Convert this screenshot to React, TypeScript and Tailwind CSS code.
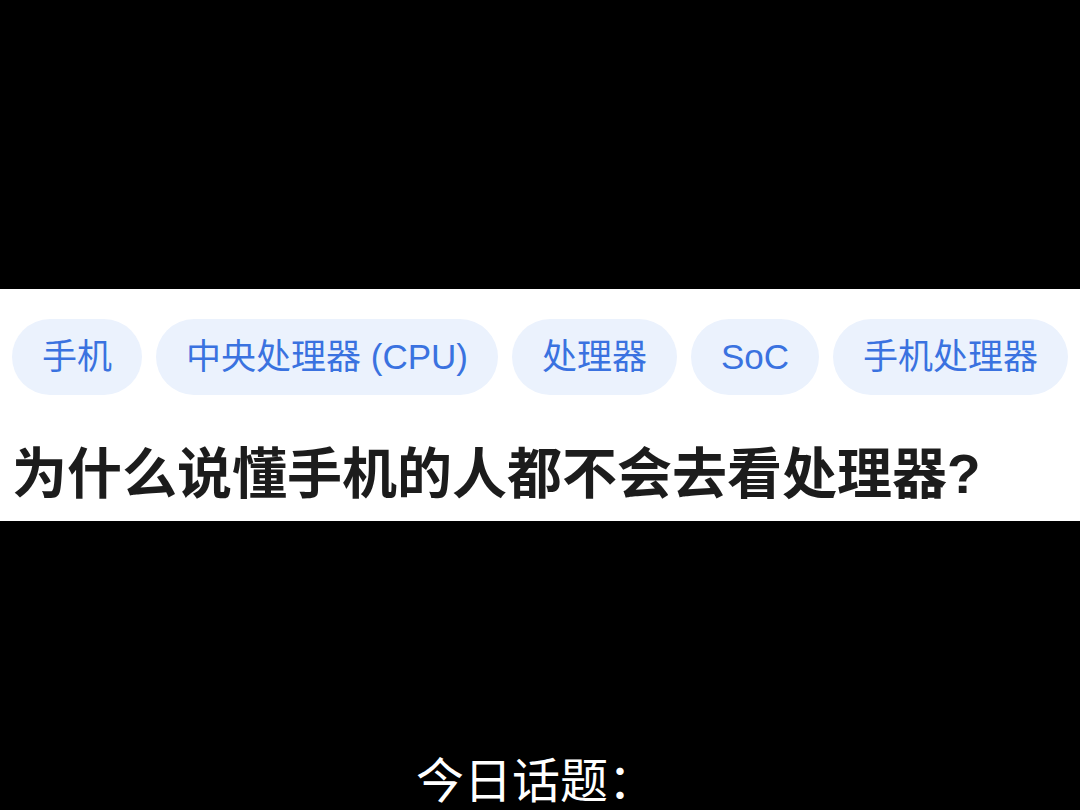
const tags = ['手机', '中央处理器 (CPU)', '处理器', 'SoC', '手机处理器']

export default function App() {
  return (
    <div
      className="w-[1080px] h-[810px] bg-black flex flex-col overflow-hidden"
      style={{ fontFamily: '"Liberation Sans", "Noto Sans CJK SC", sans-serif' }}
    >
      <div className="h-[289px]" />

      <div className="h-[232px] bg-white px-[12px] pt-[30px] overflow-hidden">
        <div className="flex gap-[14px] whitespace-nowrap">
          {tags.map((t) => (
            <span
              key={t}
              className="h-[76px] px-[30px] rounded-full bg-[#ebf2fd] text-[#3a72e0] text-[35px] flex items-center shrink-0"
            >
              {t}
            </span>
          ))}
        </div>
        <h1 className="mt-[49px] text-[55px] leading-[60px] font-bold text-[#1c1c1c] whitespace-nowrap">
          为什么说懂手机的人都不会去看处理器?
        </h1>
      </div>

      <div className="flex-1 flex flex-col justify-end items-center pb-[5px]">
        <p
          className="text-white text-[48px] leading-[56px] pr-[8px]"
          style={{ fontFamily: '"Noto Sans CJK SC", sans-serif' }}
        >
          今日话题：
        </p>
      </div>
    </div>
  )
}
